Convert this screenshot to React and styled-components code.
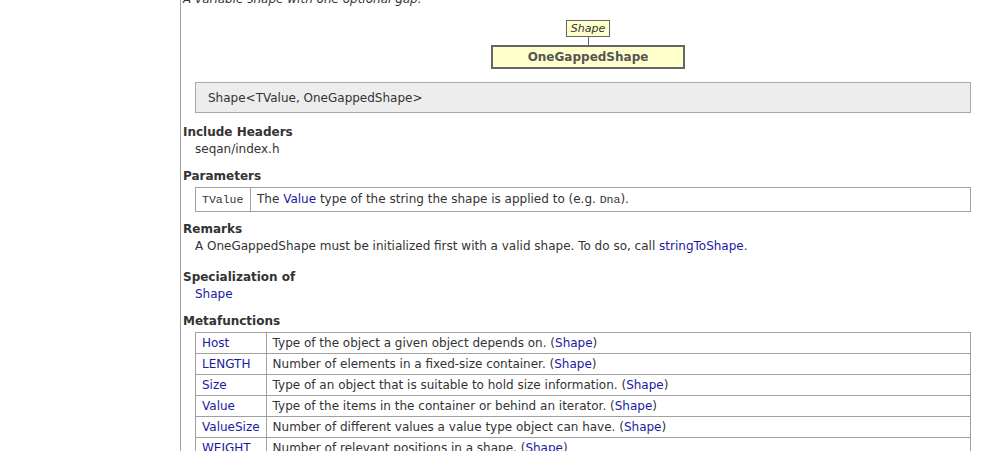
import styled, { createGlobalStyle } from "styled-components";

const GlobalStyle = createGlobalStyle`
    html, body {
        margin: 0;
        padding: 0;
        background: #ffffff;
        overflow: hidden;
    }
    body {
        font-family: "DejaVu Sans", Verdana, sans-serif;
        font-size: 12px;
        color: #333333;
    }
`;

const Page = styled.div`
    display: flex;
    height: 451px;
    overflow: hidden;
`;

const Gutter = styled.div`
    width: 180px;
    flex-shrink: 0;
`;

const Content = styled.div`
    width: 810px;
    border-left: 1px solid #a0a0a0;
    padding-left: 2px;
    display: flex;
    flex-direction: column;

    & > * {
        flex-shrink: 0;
    }
`;

const Summary = styled.div`
    margin-top: -9px;
    height: 17px;
    line-height: 17px;
    font-style: italic;
    color: #333333;
`;

const Diagram = styled.div`
    margin-top: 12px;
    display: flex;
    flex-direction: column;
    align-items: center;
`;

const BaseBox = styled.div`
    box-sizing: border-box;
    height: 17px;
    padding: 0 4px;
    border: 1px solid #666666;
    background: #ffffcc;
    font-size: 11px;
    line-height: 15px;
    font-style: italic;
    color: #333333;
`;

const Connector = styled.div`
    width: 1px;
    height: 8px;
    background: #666666;
`;

const ClassBox = styled.div`
    box-sizing: border-box;
    width: 194px;
    height: 24px;
    border: 2px solid #666666;
    background: #ffffcc;
    display: flex;
    align-items: center;
    justify-content: center;
    font-size: 12px;
    font-weight: bold;
    color: #555555;
`;

const Signature = styled.div`
    box-sizing: border-box;
    margin: 13px 22px 0 12px;
    height: 31px;
    border: 1px solid #a8a8a8;
    background: #ededed;
    padding-left: 12px;
    display: flex;
    align-items: center;
`;

const Heading = styled.div`
    margin-top: ${(p) => p.$gap}px;
    line-height: 17px;
    font-weight: bold;
`;

const Body = styled.div`
    margin-left: 12px;
    line-height: 17px;
`;

const Link = styled.a`
    color: #1a1aa0;
    text-decoration: none;
`;

const Code = styled.code`
    font-family: "Liberation Mono", "DejaVu Sans Mono", monospace;
    font-size: 11.5px;
`;

const Table = styled.table`
    margin: 2px 22px 0 12px;
    border-collapse: collapse;
    width: 776px;

    td {
        border: 1px solid #a0a0a0;
        padding: 0 6px;
        height: ${(p) => p.$row}px;
        line-height: ${(p) => p.$row}px;
        white-space: nowrap;
        vertical-align: middle;
    }
    td:first-child {
        width: ${(p) => p.$first}px;
        box-sizing: border-box;
    }
`;

const metafunctions = [
    ["Host", "Type of the object a given object depends on."],
    ["LENGTH", "Number of elements in a fixed-size container."],
    ["Size", "Type of an object that is suitable to hold size information."],
    ["Value", "Type of the items in the container or behind an iterator."],
    ["ValueSize", "Number of different values a value type object can have."],
    ["WEIGHT", "Number of relevant positions in a shape."],
];

export default function App() {
    return (
        <Page>
            <GlobalStyle />
            <Gutter />
            <Content>
                <Summary>A variable shape with one optional gap.</Summary>

                <Diagram>
                    <BaseBox>Shape</BaseBox>
                    <Connector />
                    <ClassBox>OneGappedShape</ClassBox>
                </Diagram>

                <Signature>Shape&lt;TValue, OneGappedShape&gt;</Signature>

                <Heading $gap={11}>Include Headers</Heading>
                <Body>seqan/index.h</Body>

                <Heading $gap={10}>Parameters</Heading>
                <Table $row={22} $first={55}>
                    <tbody>
                        <tr>
                            <td><Code>TValue</Code></td>
                            <td>
                                The <Link href="#">Value</Link> type of the string the shape is applied to (e.g. <Code>Dna</Code>).
                            </td>
                        </tr>
                    </tbody>
                </Table>

                <Heading $gap={9}>Remarks</Heading>
                <Body>
                    A OneGappedShape must be initialized first with a valid shape. To do so, call{" "}
                    <Link href="#">stringToShape</Link>.
                </Body>

                <Heading $gap={14}>Specialization of</Heading>
                <Body>
                    <Link href="#">Shape</Link>
                </Body>

                <Heading $gap={10}>Metafunctions</Heading>
                <Table $row={20} $first={70}>
                    <tbody>
                        {metafunctions.map(([name, text]) => (
                            <tr key={name}>
                                <td><Link href="#">{name}</Link></td>
                                <td>
                                    {text} (<Link href="#">Shape</Link>)
                                </td>
                            </tr>
                        ))}
                    </tbody>
                </Table>
            </Content>
        </Page>
    );
}
